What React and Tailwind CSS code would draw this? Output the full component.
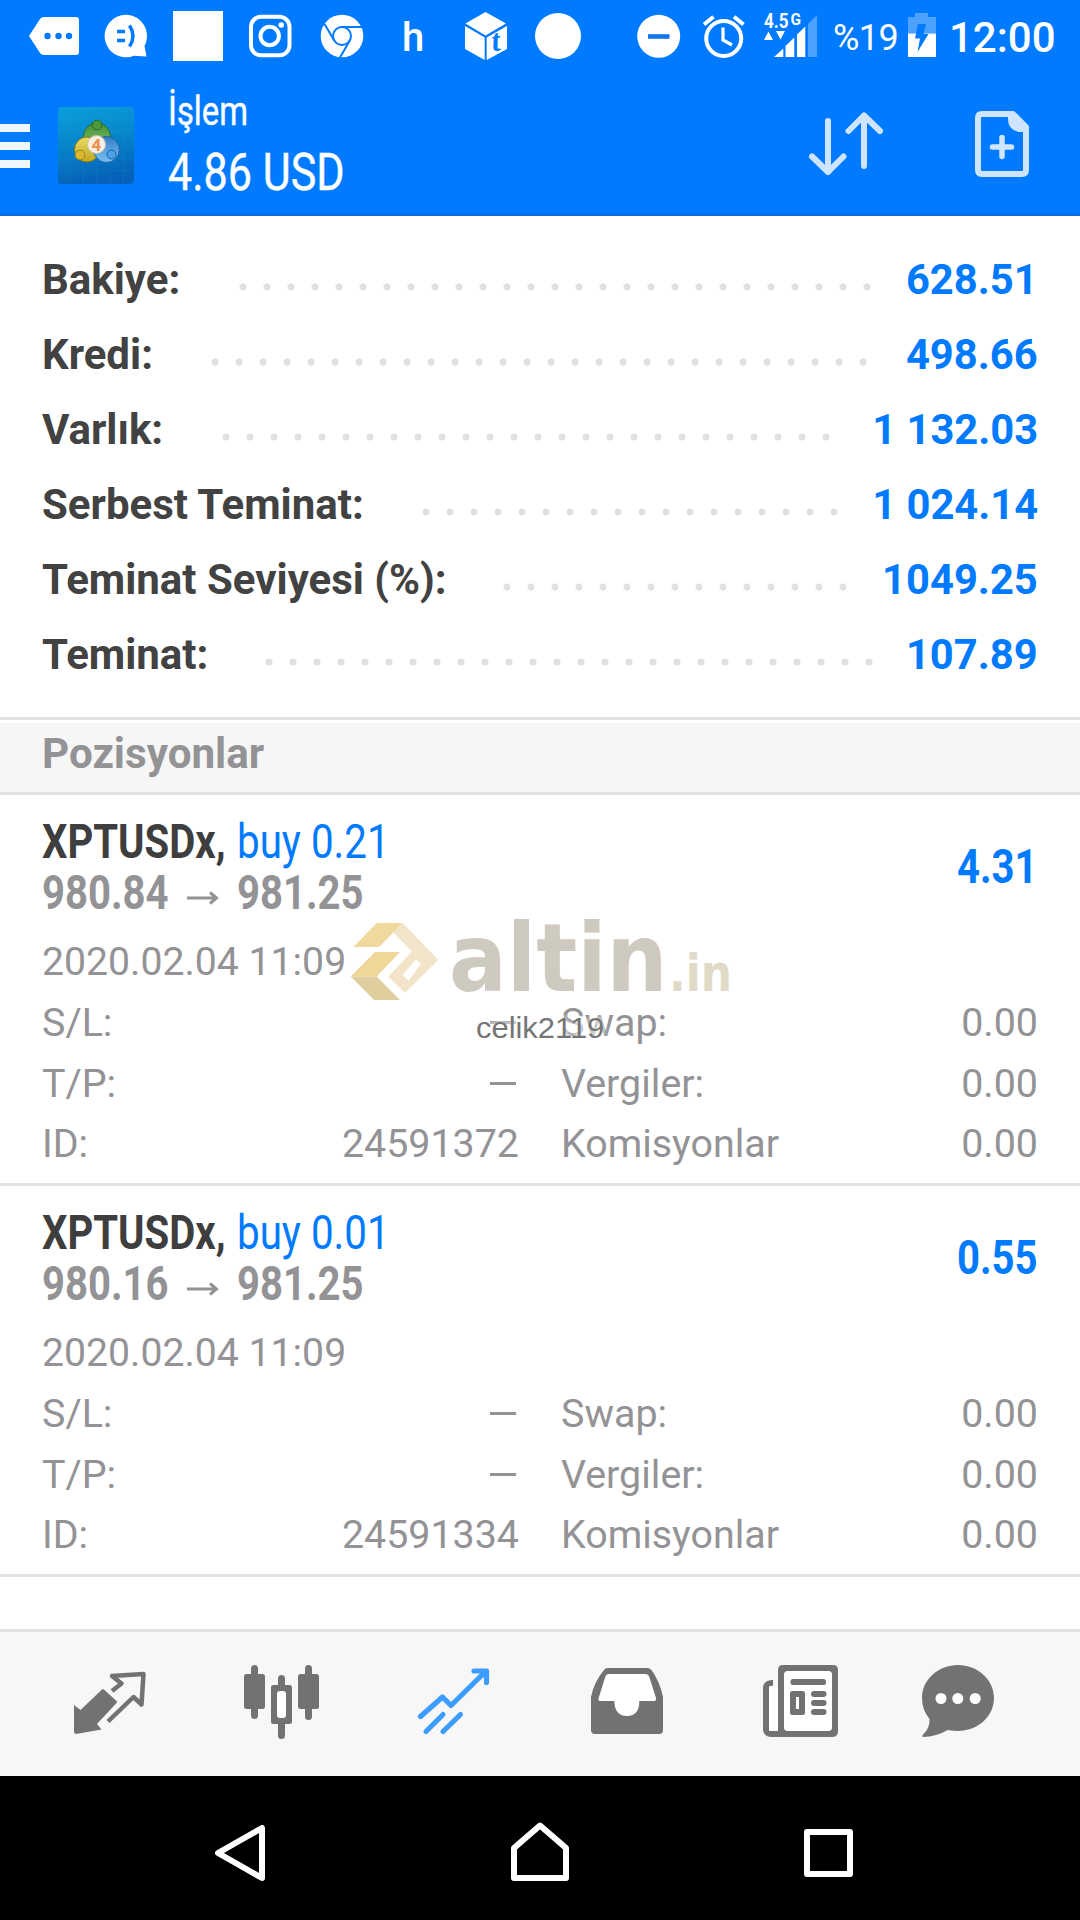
import React from "react";

const summary = [
  { label: "Bakiye:", value: "628.51", labelWidth: "w-[189px]", dots: "w-[648px]" },
  { label: "Kredi:", value: "498.66", labelWidth: "w-[161px]", dots: "w-[672px]" },
  { label: "Varlık:", value: "1 132.03", labelWidth: "w-[172px]", dots: "w-[624px]" },
  { label: "Serbest Teminat:", value: "1 024.14", labelWidth: "w-[372px]", dots: "w-[432px]" },
  { label: "Teminat Seviyesi (%):", value: "1049.25", labelWidth: "w-[453px]", dots: "w-[360px]" },
  { label: "Teminat:", value: "107.89", labelWidth: "w-[215px]", dots: "w-[624px]" },
];

const positions = [
  { volume: "0.21", open: "980.84", current: "981.25", profit: "4.31", time: "2020.02.04 11:09", id: "24591372" },
  { volume: "0.01", open: "980.16", current: "981.25", profit: "0.55", time: "2020.02.04 11:09", id: "24591334" },
];

/* Each drawing keeps the coordinates of the screen it sits on. */
function Drawing({ x, y, w, h, className = "", children }) {
  return (
    <svg className={`shrink-0 ${className}`} width={w} height={h} viewBox={`${x} ${y} ${w} ${h}`} fill="none">
      {children}
    </svg>
  );
}

function StatusIcon({ x, w, className, children }) {
  return (
    <Drawing x={x} y={0} w={w} h={72} className={className}>
      {children}
    </Drawing>
  );
}

function StatusBar() {
  return (
    <div className="flex h-[72px] pl-[28px] text-white">
      <StatusIcon x={28} w={52}>
        <path d="M29 36 L40 19 Q41.5 17 44 17 H76 Q79 17 79 20 V52 Q79 55 76 55 H44 Q41.5 55 40 53Z" fill="#fff" />
        <g fill="#007aff">
          <circle cx="47.5" cy="36" r="3.2" />
          <circle cx="58.5" cy="36" r="3.2" />
          <circle cx="69" cy="36" r="3.2" />
        </g>
      </StatusIcon>
      <StatusIcon x={104} w={44} className="ml-[24px]">
        <path d="M126 14.7 a21.3 21.3 0 1 0 8 41 L146.500 56.500 L144.500 46 A21.3 21.300 0 0 0 126 14.700Z" fill="#fff" />
        <path d="M117 31.500h8M117 40.500h8M129.500 25.500q7 10.500 0 21" stroke="#007aff" strokeWidth="3.500" strokeLinecap="butt" />
      </StatusIcon>
      <div className="mt-[11px] ml-[25px] h-[50px] w-[50px] shrink-0 bg-white" />
      <StatusIcon x={248} w={44} className="ml-[25px]">
        <rect x="251" y="16.800" width="38.500" height="38.500" rx="10" stroke="#fff" strokeWidth="4" />
        <circle cx="269.700" cy="36" r="9.200" stroke="#fff" strokeWidth="4" />
        <circle cx="281.200" cy="25" r="2.800" fill="#fff" />
      </StatusIcon>
      <StatusIcon x={320} w={44} className="ml-[28px]">
        <circle cx="342" cy="36" r="21.300" fill="#fff" />
        <g stroke="#007aff" strokeWidth="2">
          <circle cx="342" cy="36" r="9" />
          <path d="M342 27 H362 M334.200 40.500 L324.500 24 M349.800 40.500 L340 57.500" />
        </g>
      </StatusIcon>
      <span className="ml-[38px] w-[24px] text-[40px] leading-[75px] font-medium">h</span>
      <StatusIcon x={464} w={44} className="ml-[38px]">
        <g fill="#fff">
          <path d="M485.500 12 L506 23.500 L485.500 35.500 L465.500 23.500Z" />
          <path d="M465 26 L484.700 37.500 V60 L465 49Z" />
          <path d="M507 26 L486.700 37.500 V60 L507 49Z" />
        </g>
        <text x="491.500" y="50.500" fill="#007aff" fontFamily="Liberation Serif, serif" fontWeight="700" fontStyle="italic" fontSize="31" transform="rotate(-8 497 42)">t</text>
      </StatusIcon>
      <div className="mt-[13px] ml-[27px] h-[46px] w-[46px] shrink-0 rounded-full bg-white" />
      <StatusIcon x={636} w={46} className="ml-[55px]">
        <circle cx="658.700" cy="36.300" r="21.500" fill="#fff" />
        <path d="M648 36.500h21.500" stroke="#1476e8" strokeWidth="4.600" />
      </StatusIcon>
      <StatusIcon x={702} w={44} className="ml-[20px]">
        <circle cx="723.700" cy="38.500" r="17.500" stroke="#fff" strokeWidth="4" />
        <path d="M723 27.500 V40 L732 45" stroke="#fff" strokeWidth="3.200" />
        <path d="M704 24.500 L713.500 16.800 M743.500 24.500 L734 16.800" stroke="#fff" strokeWidth="4" />
      </StatusIcon>
      <StatusIcon x={762} w={58} className="ml-[16px]">
        <text x="764" y="27.500" fill="#fff" fontFamily="Roboto, sans-serif" fontWeight="700" fontSize="20" textLength="24.500" lengthAdjust="spacingAndGlyphs">4.5</text>
        <text x="790.500" y="24.500" fill="#fff" fontFamily="Roboto, sans-serif" fontWeight="700" fontSize="16" textLength="10.500" lengthAdjust="spacingAndGlyphs">G</text>
        <path d="M764 40 L768.500 31.500 L773 40Z M776 31 H785 L780.500 39.500Z" fill="#fff" />
        <path d="M774 57 L783.300 48.500 V57Z M785.500 57 V46 L794.300 37.500 V57Z M797 57 V34.500 L805.300 26.500 V57Z" fill="#fff" />
        <path d="M808 57 V24 L817 15 V57Z" fill="#fff" opacity=".3" />
      </StatusIcon>
      <span className="ml-[13px] w-[70px] shrink-0 text-[36px] leading-[76px] tracking-[-0.5px]">%19</span>
      <StatusIcon x={907} w={30} className="ml-[4px]">
        <path d="M915 13 H928 V17 H936 V33.500 H908 V17 H915Z" fill="#fff" opacity=".3" />
        <path d="M908 33.500 H936 V57 H908Z" fill="#fff" />
        <path d="M918 24 H926 L923.500 34 H928.500 L917.500 52 L920 38.500 H915Z" fill="#007aff" />
      </StatusIcon>
      <span className="ml-[12px] shrink-0 text-[42px] leading-[75px] font-medium">12:00</span>
    </div>
  );
}

function AppLogo() {
  return (
    <Drawing x={57} y={72} w={80} h={144} className="ml-[27px]">
      <defs>
        <linearGradient id="tile" x1="0" y1="0" x2="0.2" y2="1">
          <stop offset="0" stopColor="#0a9fdc" />
          <stop offset="0.5" stopColor="#0785cb" />
          <stop offset="1" stopColor="#0562b8" />
        </linearGradient>
        <linearGradient id="green" x1="0" y1="0" x2="0" y2="1">
          <stop offset="0" stopColor="#3f8f3b" />
          <stop offset="1" stopColor="#8cc866" />
        </linearGradient>
        <linearGradient id="yellow" x1="0" y1="0" x2="0" y2="1">
          <stop offset="0" stopColor="#e9dd62" />
          <stop offset="1" stopColor="#c4a51f" />
        </linearGradient>
        <linearGradient id="blue" x1="0" y1="0" x2="0" y2="1">
          <stop offset="0" stopColor="#2f80c8" />
          <stop offset="1" stopColor="#7cc0f2" />
        </linearGradient>
      </defs>
      <rect x="58" y="107" width="76" height="77" rx="4" fill="url(#tile)" />
      <path d="M70 107v77M83 107v77M97 107v77M110 107v77M123 107v77M58 119h76M58 132h76M58 145h76M58 158h76M58 171h76" stroke="#35b5e8" strokeOpacity=".12" />
      <circle cx="97" cy="136.500" r="13.500" fill="url(#green)" stroke="#2c6a2a" />
      <circle cx="87" cy="149.500" r="12.500" fill="url(#yellow)" stroke="#85761d" />
      <circle cx="106.500" cy="149.500" r="13" fill="url(#blue)" stroke="#1d5e9c" />
      <circle cx="97" cy="125" r="4.800" fill="#4b9a3a" stroke="#2c6a2a" />
      <circle cx="80" cy="155" r="4.800" fill="#dcb92b" stroke="#9c8420" />
      <circle cx="111.500" cy="154.500" r="4.500" fill="#4aa3e8" stroke="#1d5e9c" />
      <circle cx="96.500" cy="144.500" r="9" fill="#f7efe6" stroke="#c9c1af" />
      <text x="96.500" y="150.500" textAnchor="middle" fontFamily="Roboto, sans-serif" fontWeight="700" fontSize="17" fill="#ef8e48">4</text>
    </Drawing>
  );
}

function TitleBar() {
  return (
    <div className="flex h-[144px] border-b-[3px] border-[#0a6fe4] text-white">
      <div className="mt-[52px] flex w-[30px] shrink-0 flex-col gap-[10px]">
        <div className="h-[8px] bg-[#eef6ff]" />
        <div className="h-[8px] bg-[#eef6ff]" />
        <div className="h-[8px] bg-[#eef6ff]" />
      </div>
      <AppLogo />
      <div className="ml-[31px] w-[400px] shrink-0 pt-[20px]">
        <div className="w-max origin-left scale-x-[0.82] text-[40px] leading-[40px] whitespace-nowrap [-webkit-text-stroke:0.4px_white]">İşlem</div>
        <div className="mt-[11px] w-max origin-left scale-x-[0.845] text-[51px] leading-[60px] whitespace-nowrap [-webkit-text-stroke:0.4px_white]">4.86 USD</div>
      </div>
      <Drawing x={800} y={72} w={90} h={144} className="ml-[232px]">
        <path d="M828 121 V172 M812 156.500 L828 172 L843.500 156.500 M864 166 V115.500 M848.500 131 L864 115.500 L880 131" stroke="#cfe5ff" strokeWidth="6" strokeLinecap="round" strokeLinejoin="round" />
      </Drawing>
      <Drawing x={970} y={72} w={64} h={144} className="ml-[80px]">
        <path d="M982 114 H1013 L1026 127 V170 Q1026 174 1022 174 H982 Q978 174 978 170 V118 Q978 114 982 114Z" stroke="#cfe5ff" strokeWidth="6" strokeLinejoin="round" />
        <path d="M1008 114 H1014 L1027 127 V132 H1019 Q1008 130 1008 119Z" fill="#cfe5ff" />
        <path d="M992.500 147 H1011.500 M1002 137.500 V156.500" stroke="#cfe5ff" strokeWidth="5.500" strokeLinecap="round" />
      </Drawing>
    </div>
  );
}

function SummaryRow({ label, value, labelWidth, dots }) {
  return (
    <div className="flex h-[75px] text-[42px] leading-[75px] font-bold whitespace-nowrap">
      <span className={`${labelWidth} shrink-0 text-[#424242]`}>{label}</span>
      <span
        className={`${dots} mt-[33px] h-[24px] shrink-0 bg-[length:24px_24px] bg-[radial-gradient(circle_at_center,#e0e0e0_3px,transparent_4px)]`}
      />
      <span className="ml-auto origin-right scale-x-[0.993] text-[#007aff]">{value}</span>
    </div>
  );
}

function DetailRow({ left, leftValue, right, rightValue }) {
  return (
    <div className="flex h-[60.5px] text-[39.4px] leading-[62px]">
      <span>{left}</span>
      <span className="mr-[42px] ml-auto flex items-start">
        {leftValue || <span className="mt-[29px] mr-[3px] h-[3px] w-[26px] bg-[#939396]" />}
      </span>
      <span className="flex w-[477px] justify-between">
        <span>{right}</span>
        <span>{rightValue}</span>
      </span>
    </div>
  );
}

function Position({ volume, open, current, profit, time, id }) {
  return (
    <div className="h-[391px] border-b-[3px] border-[#e2e2e2] pt-[21px] pr-[42px] pl-[42px] text-[#939396]">
      <div className="flex h-[102px] items-center justify-between text-[48px] leading-[51px] font-bold whitespace-nowrap">
        <div className="grid grid-cols-[195px_200px]">
          <div className="col-span-2 grid grid-cols-subgrid">
            <span className="w-max origin-left scale-x-[0.835] text-[#3e3e3e]">XPTUSDx,</span>
            <span className="w-max origin-left scale-x-[0.84] font-normal text-[#007aff]">buy {volume}</span>
          </div>
          <div className="flex items-center">
            <span className="w-[145px]">
              <span className="inline-block origin-left scale-x-[0.835]">{open}</span>
            </span>
            <svg className="mt-[10px] shrink-0" width="32" height="14" viewBox="0 0 32 14" fill="none" stroke="#939396" strokeWidth="3">
              <path d="M0 7H29M23 1.500L29.500 7L23 12.500" />
            </svg>
          </div>
          <span className="w-max origin-left scale-x-[0.835]">{current}</span>
        </div>
        <span className="mb-[2px] origin-right scale-x-[0.835] text-[#007aff]">{profit}</span>
      </div>
      <div className="mt-[14px] h-[60px] text-[39.2px] leading-[61px]">{time}</div>
      <DetailRow left="S/L:" right="Swap:" rightValue="0.00" />
      <DetailRow left="T/P:" right="Vergiler:" rightValue="0.00" />
      <DetailRow left="ID:" leftValue={id} right="Komisyonlar" rightValue="0.00" />
    </div>
  );
}

function Watermark() {
  return (
    <div className="pointer-events-none absolute top-[110px] left-[350px] w-[400px]">
      <svg className="absolute top-[17px] left-0" width="90" height="80" viewBox="350 922 90 80">
        <path d="M376.700 923H402.700L379 947H353.300Z" fill="#efd99d" />
        <path d="M402.700 923L438.300 960L405 992.700L388.300 976.700L412 951.500L393.500 932.500Z" fill="#f1e4c8" />
        <path d="M416 959.500L421 964L408.500 980.700L402.500 975Z" fill="#fff" />
        <path d="M375 952H400L376.700 976.500H350.700Z" fill="#efd798" />
        <path d="M350.700 976.500H376.700L400 1000H374Z" fill="#dfcf9f" />
      </svg>
      <div className="absolute top-[-2px] left-[99px] w-max origin-left scale-x-[0.902] font-['DejaVu_Sans'] text-[95px] leading-[110px] font-bold whitespace-nowrap text-[#cfcabf]">
        altin
      </div>
      <div className="absolute top-[27px] left-[319px] w-max origin-left scale-x-[0.86] font-['DejaVu_Sans'] text-[51px] leading-[84px] font-bold whitespace-nowrap text-[#e0dac8]">
        .in
      </div>
      <div className="absolute top-[106px] left-[126px] w-max origin-left scale-x-[1.03] font-['Liberation_Sans'] text-[30px] leading-[34px] whitespace-nowrap text-[#757575] [text-shadow:0_0_4px_#fff,0_0_6px_#fff]">
        celik2119
      </div>
    </div>
  );
}

function TabIcon({ x, w, className, children }) {
  return (
    <Drawing x={x} y={1632} w={w} h={144} className={className}>
      {children}
    </Drawing>
  );
}

function TabBar() {
  return (
    <div className="flex h-[147px] border-t-[3px] border-[#e2e2e2] bg-[#f7f7f7] pl-[72px]">
      <TabIcon x={72} w={78}>
        <path d="M74 1705L80.500 1710L102 1689.500Q103 1688.500 104.500 1690L116.500 1701Q117.500 1702 116.500 1703L97 1724L101.500 1729.500L76 1734L74 1732.500Z" fill="#727272" />
        <path d="M112 1691L121.500 1683.500L112 1676L143.500 1674L141.500 1704.500L133.500 1697L108 1721.500" stroke="#727272" strokeWidth="4.500" strokeLinejoin="round" />
      </TabIcon>
      <TabIcon x={242} w={80} className="ml-[92px]">
        <g fill="#727272">
          <rect x="244" y="1674" width="21" height="35" rx="2.500" />
          <rect x="251" y="1665" width="7" height="54" rx="3.500" />
          <rect x="298" y="1674" width="21" height="35" rx="2.500" />
          <rect x="305" y="1665" width="7" height="55" rx="3.500" />
          <rect x="271" y="1685" width="21" height="39" rx="2.500" />
          <rect x="278" y="1675" width="7" height="64" rx="3.500" />
        </g>
        <rect x="277" y="1691" width="9" height="27" rx="3" fill="#fff" />
      </TabIcon>
      <TabIcon x={416} w={76} className="ml-[94px]">
        <path d="M420.500 1716.500L442.500 1697L451 1705.500L485 1672M426 1731.500L443 1714.500M443 1731.500L460.500 1714.500M474 1671H486.500V1682.500" stroke="#3c9dff" strokeWidth="5.200" strokeLinecap="round" strokeLinejoin="round" />
        <path d="M477 1670.500H487V1681Z" fill="#3c9dff" />
      </TabIcon>
      <TabIcon x={588} w={78} className="ml-[96px]">
        <path d="M604 1670Q605 1668 608 1668H647Q650 1668 651.500 1670Q660 1682 663 1697V1730Q663 1734 659 1734H595Q591 1734 591 1730V1697Q594 1682 604 1670Z" fill="#727272" />
        <path d="M605.500 1676Q606.500 1674 609 1674H645Q648 1674 649 1676L656 1698Q656.500 1701 654 1701H639.200V1704Q638 1716 627 1716Q616 1716 614.500 1704V1701H600Q598 1701 598.500 1698.500Z" fill="#fff" />
      </TabIcon>
      <TabIcon x={760} w={80} className="ml-[94px]">
        <path d="M773 1680H771Q763 1681 763 1688V1730Q764 1737 771 1737H832Q838 1737 838 1731V1670Q838 1665 833 1665H783Q778 1665 778 1670V1731H769V1687Q770 1686 773 1685.500Z" fill="#727272" />
        <rect x="769" y="1686" width="9" height="45" rx="1.500" fill="#fff" />
        <rect x="784" y="1671" width="48" height="60" rx="3.500" fill="#fff" />
        <g fill="#727272">
          <rect x="790.500" y="1679" width="35.500" height="6" rx="2.500" />
          <rect x="790" y="1691" width="15" height="24" rx="2.500" />
          <rect x="811" y="1691" width="15.500" height="6" rx="3" />
          <rect x="811" y="1700" width="15.500" height="6" rx="3" />
          <rect x="811" y="1709" width="15.500" height="6" rx="3" />
        </g>
        <rect x="796" y="1697" width="3" height="12" fill="#fff" />
      </TabIcon>
      <TabIcon x={920} w={76} className="ml-[80px]">
        <path d="M958 1665C977 1665 994 1679 994 1698C994 1717 977 1731 958 1731Q953 1731 948 1730Q935 1737 923.500 1737Q921 1736.500 923.500 1734Q930 1728 929.500 1719Q922 1710 922 1698C922 1679 939 1665 958 1665Z" fill="#727272" />
        <g fill="#fff">
          <circle cx="941" cy="1698.500" r="5.500" />
          <circle cx="957.800" cy="1698.500" r="5.500" />
          <circle cx="975.200" cy="1698.500" r="5.500" />
        </g>
      </TabIcon>
    </div>
  );
}

function SystemBar() {
  return (
    <div className="flex h-[144px] bg-black pl-[210px]">
      <Drawing x={210} y={1776} w={60} h={144}>
        <path d="M218 1853L262 1828V1878Z" stroke="#fff" strokeWidth="6" strokeLinejoin="round" />
      </Drawing>
      <Drawing x={505} y={1776} w={70} h={144} className="ml-[235px]">
        <path d="M514 1848L540 1825.500L566 1848V1878H514Z" stroke="#fff" strokeWidth="6" strokeLinejoin="round" />
      </Drawing>
      <Drawing x={800} y={1776} w={60} h={144} className="ml-[225px]">
        <rect x="807" y="1832" width="43" height="42" stroke="#fff" strokeWidth="6" strokeLinejoin="round" />
      </Drawing>
    </div>
  );
}

export default function App() {
  return (
    <div className="flex h-[1920px] w-[1080px] flex-col overflow-hidden bg-white font-['Roboto',sans-serif]">
      <header className="h-[216px] shrink-0 bg-[#007aff]">
        <StatusBar />
        <TitleBar />
      </header>
      <main className="flex-1">
        <section className="h-[504px] border-b-[3px] border-[#e2e2e2] pt-[26px] pr-[42px] pl-[42px]">
          {summary.map((row) => (
            <SummaryRow key={row.label} {...row} />
          ))}
        </section>
        <h2 className="mt-[3px] h-[72px] border-b-[3px] border-[#e2e2e2] bg-[#f6f6f6] pl-[42px] text-[42.2px] leading-[62px] font-bold text-[#939396]">
          Pozisyonlar
        </h2>
        <section className="relative">
          {positions.map((position) => (
            <Position key={position.id} {...position} />
          ))}
          <Watermark />
        </section>
      </main>
      <TabBar />
      <SystemBar />
    </div>
  );
}
